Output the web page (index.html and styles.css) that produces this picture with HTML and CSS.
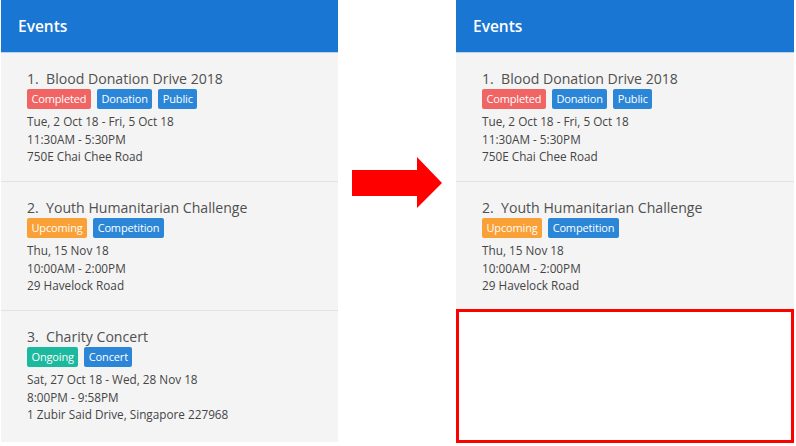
FILE: index.html
```html
<!DOCTYPE html>
<html>
<head>
<meta charset="utf-8">
<link rel="stylesheet" href="styles.css">
</head>
<body>
<div class="stage">
  <section class="panel panel-left">
    <header class="panel-head">Events</header>
    <div class="card">
      <div class="title">1.&nbsp; Blood Donation Drive 2018</div>
      <div class="tags"><span class="tag red">Completed</span><span class="tag blue">Donation</span><span class="tag blue">Public</span></div>
      <div class="info">Tue, 2 Oct 18 - Fri, 5 Oct 18</div>
      <div class="info">11:30AM - 5:30PM</div>
      <div class="info">750E Chai Chee Road</div>
    </div>
    <div class="card">
      <div class="title">2.&nbsp; Youth Humanitarian Challenge</div>
      <div class="tags"><span class="tag orange">Upcoming</span><span class="tag blue">Competition</span></div>
      <div class="info">Thu, 15 Nov 18</div>
      <div class="info">10:00AM - 2:00PM</div>
      <div class="info">29 Havelock Road</div>
    </div>
    <div class="card last">
      <div class="title">3.&nbsp; Charity Concert</div>
      <div class="tags"><span class="tag teal">Ongoing</span><span class="tag blue">Concert</span></div>
      <div class="info">Sat, 27 Oct 18 - Wed, 28 Nov 18</div>
      <div class="info">8:00PM - 9:58PM</div>
      <div class="info">1 Zubir Said Drive, Singapore 227968</div>
    </div>
  </section>
  <div class="arrow-col">
    <svg class="arrow" width="90" height="51" viewBox="0 0 90 51"><polygon points="0,13 65,13 65,0 90,26 65,51 65,39 0,39" fill="#ff0000"/></svg>
  </div>
  <div class="right-col">
    <section class="panel panel-right">
      <header class="panel-head">Events</header>
      <div class="card">
        <div class="title">1.&nbsp; Blood Donation Drive 2018</div>
        <div class="tags"><span class="tag red">Completed</span><span class="tag blue">Donation</span><span class="tag blue">Public</span></div>
        <div class="info">Tue, 2 Oct 18 - Fri, 5 Oct 18</div>
        <div class="info">11:30AM - 5:30PM</div>
        <div class="info">750E Chai Chee Road</div>
      </div>
      <div class="card last">
        <div class="title">2.&nbsp; Youth Humanitarian Challenge</div>
        <div class="tags"><span class="tag orange">Upcoming</span><span class="tag blue">Competition</span></div>
        <div class="info">Thu, 15 Nov 18</div>
        <div class="info">10:00AM - 2:00PM</div>
        <div class="info">29 Havelock Road</div>
      </div>
    </section>
    <div class="empty-box"></div>
  </div>
</div>
</body>
</html>
```
FILE: styles.css
```css
html, body {
  margin: 0;
  padding: 0;
  background: #ffffff;
}
body {
  font-family: "Open Sans", "Noto Sans", sans-serif;
  width: 796px;
  height: 446px;
  overflow: hidden;
}
.stage {
  display: flex;
  align-items: flex-start;
}
.panel {
  background: #f4f4f4;
}
.panel-left {
  width: 337px;
  height: 442px;
  margin-left: 1px;
}
.panel-head {
  height: 52px;
  background: #1976d2;
  border-bottom: 1px solid #b9d2ee;
  color: #ffffff;
  font-size: 15.5px;
  font-weight: 600;
  line-height: 52px;
  padding-left: 17px;
  box-sizing: content-box;
}
.card {
  padding: 16px 10px 15.5px 26px;
  border-bottom: 1px solid #e2e2e2;
}
.card.last {
  border-bottom: none;
}
.title {
  font-size: 14.1px;
  line-height: 20px;
  color: #505050;
}
.tags {
  display: flex;
  gap: 6px;
  margin-top: 0;
  margin-bottom: 4px;
}
.tag {
  display: inline-block;
  height: 20px;
  line-height: 20px;
  padding: 0 4.5px;
  font-size: 11px;
  letter-spacing: -0.15px;
  color: #ffffff;
  border-radius: 2px;
}
.tag.red { background: #f06464; }
.tag.blue { background: #2b86d8; }
.tag.orange { background: #f9a036; }
.tag.teal { background: #1bb99e; }
.info {
  font-size: 11.75px;
  line-height: 17.5px;
  color: #454545;
}
.arrow-col {
  width: 118px;
  display: flex;
  justify-content: center;
  padding-top: 157px;
}
.arrow {
  display: block;
}
.right-col {
  width: 338px;
}
.panel-right .card.last {
  padding-bottom: 14px;
}
.empty-box {
  height: 134px;
  border: 3px solid #ff0000;
  box-sizing: border-box;
  background: #ffffff;
}
```
